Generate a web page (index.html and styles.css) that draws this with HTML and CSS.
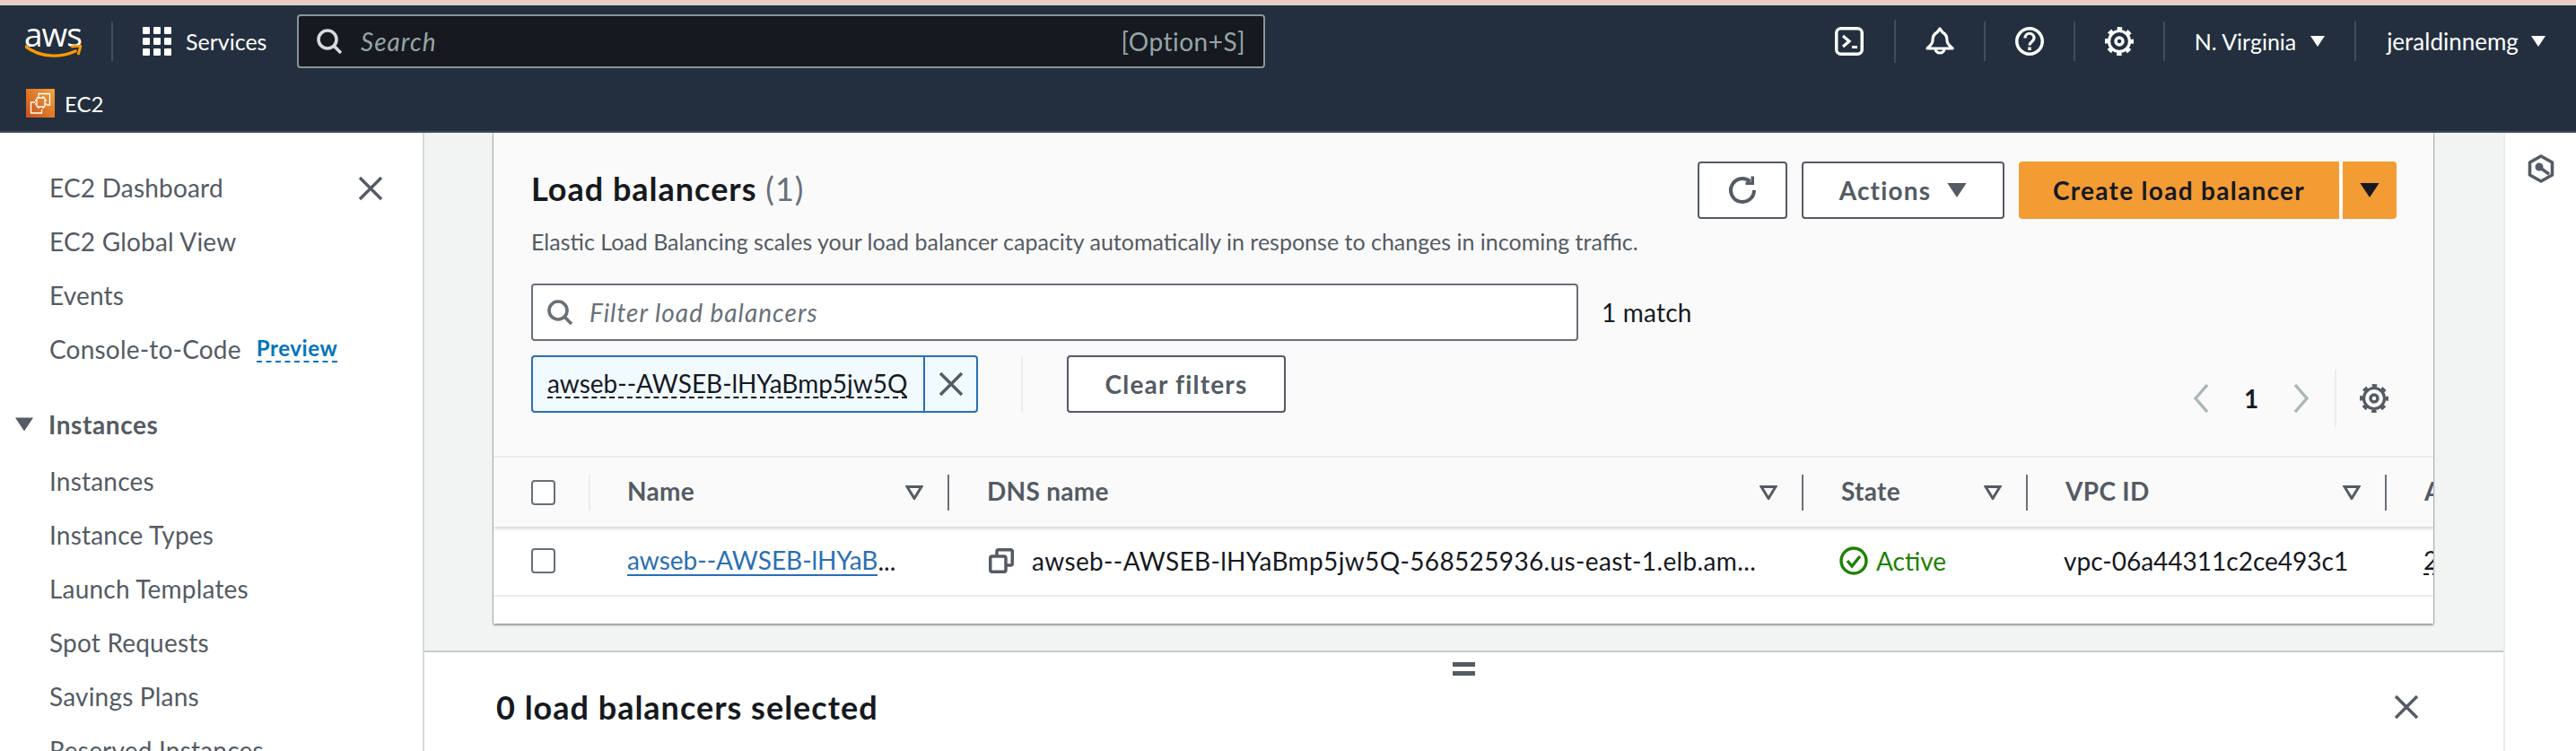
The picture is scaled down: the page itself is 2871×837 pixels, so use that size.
FILE: index.html
```html
<!DOCTYPE html>
<html lang="en">
<head>
<meta charset="utf-8">
<title>Load balancers | EC2</title>
<link rel="stylesheet" href="styles.css">
</head>
<body>
<svg class="defs" width="0" height="0">
  <symbol id="i-x" viewBox="0 0 28 28"><path d="M2 2l24 24M26 2L2 26" fill="none" stroke="currentColor" stroke-width="3.400"/></symbol>
  <symbol id="i-caret" viewBox="0 0 16 12"><path d="M0 0h16L8 12z" fill="currentColor"/></symbol>
  <symbol id="i-sort" viewBox="0 0 20 16"><path d="M2 1.500h16L10 14.500z" fill="none" stroke="currentColor" stroke-width="3"/></symbol>
  <symbol id="i-search" viewBox="0 0 28 28"><circle cx="12" cy="12" r="10" fill="none" stroke="currentColor" stroke-width="3.600"/><path d="M19 19l8 8" fill="none" stroke="currentColor" stroke-width="3.600"/></symbol>
  <symbol id="i-gear" viewBox="0 0 32 32"><circle cx="16" cy="16" r="11.500" fill="none" stroke="currentColor" stroke-width="3.200"/><circle cx="16" cy="16" r="14.250" fill="none" stroke="currentColor" stroke-width="3.500" stroke-dasharray="5.500 5.690" stroke-dashoffset="2.750"/><circle cx="16" cy="16" r="4" fill="none" stroke="currentColor" stroke-width="3.400"/></symbol>
</svg>

<header class="topnav">
  <div class="topnav-main">
    <div class="aws-logo">
      <span class="aws-word">aws</span>
      <svg class="aws-smile" viewBox="0 0 64 16"><path d="M1 2c16 12 38 13 56 5" fill="none" stroke="#f90" stroke-width="3.400" stroke-linecap="round"/><path d="M52 2l11-1-3 10" fill="none" stroke="#f90" stroke-width="3" stroke-linejoin="round"/></svg>
    </div>
    <span class="nav-sep nav-sep-logo"></span>
    <div class="services">
      <span class="grid-icon"><i></i><i></i><i></i><i></i><i></i><i></i><i></i><i></i><i></i></span>
      <span>Services</span>
    </div>
    <div class="global-search">
      <svg class="search-icon"><use href="#i-search"/></svg>
      <span class="global-search-text">Search</span>
      <span class="global-search-key">[Option+S]</span>
    </div>
    <div class="nav-tools">
      <span class="tool">
        <svg class="tool-icon" viewBox="0 0 32 32"><rect x="1.750" y="1.750" width="28.500" height="28.500" rx="5" fill="none" stroke="currentColor" stroke-width="3.500"/><path d="M9 10l7 6-7 6M19 22.500h6" fill="none" stroke="currentColor" stroke-width="3.200"/></svg>
      </span>
      <span class="tool tool-tall">
        <svg class="tool-icon" viewBox="0 0 32 32"><path d="M16 2l3 4c4 2 5 5 5 9 0 4 3 6 6 9H2c3-3 6-5 6-9 0-4 1-7 5-9z" fill="none" stroke="currentColor" stroke-width="3.200" stroke-linejoin="round"/><path d="M11 24a5 5 0 0 0 10 0" fill="none" stroke="currentColor" stroke-width="3.200"/></svg>
      </span>
      <span class="tool">
        <svg class="tool-icon" viewBox="0 0 32 32"><circle cx="16" cy="16" r="14.250" fill="none" stroke="currentColor" stroke-width="3.500"/><path d="M11 12.500c0-7 10-7 10 0 0 4-5 4-5 8" fill="none" stroke="currentColor" stroke-width="3.200"/><path d="M14.250 22.500h3.500V26h-3.500z" fill="currentColor"/></svg>
      </span>
      <span class="tool">
        <svg class="tool-icon"><use href="#i-gear"/></svg>
      </span>
      <span class="tool tool-text tool-region">N. Virginia <svg class="tool-caret"><use href="#i-caret"/></svg></span>
      <span class="tool tool-text tool-user">jeraldinnemg <svg class="tool-caret"><use href="#i-caret"/></svg></span>
    </div>
  </div>
  <div class="topnav-sub">
    <span class="ec2-tile">
      <svg viewBox="0 0 32 32" fill="none" stroke="#fff" stroke-width="1.300"><path d="M14 8V5.500h12.500V18H23"/><path d="M10 15H5.500v12h12v-4"/><rect x="12" y="10" width="9" height="10" rx="1"/><path d="M14 8v2M19 8v2M14 20v2M19 20v2M10 13h2M10 17h2M21 13h2M21 17h2"/></svg>
    </span>
    <span>EC2</span>
  </div>
</header>

<div class="shell">
  <nav class="sidenav">
    <div class="side-close">
      <svg class="x-icon"><use href="#i-x"/></svg>
    </div>
    <ul class="side-list">
      <li class="side-item">EC2 Dashboard</li>
      <li class="side-item">EC2 Global View</li>
      <li class="side-item">Events</li>
      <li class="side-item">Console-to-Code <span class="preview">Preview</span></li>
    </ul>
    <div class="side-head"><svg class="side-caret"><use href="#i-caret"/></svg>Instances</div>
    <ul class="side-list">
      <li class="side-item">Instances</li>
      <li class="side-item">Instance Types</li>
      <li class="side-item">Launch Templates</li>
      <li class="side-item">Spot Requests</li>
      <li class="side-item">Savings Plans</li>
      <li class="side-item">Reserved Instances</li>
    </ul>
  </nav>

  <main class="main">
    <section class="main-top">
      <div class="card">
        <div class="card-header">
          <div class="title-row">
            <div>
              <h1 class="card-title">Load balancers <span class="count">(1)</span></h1>
            </div>
            <div class="actions">
              <button class="btn btn-icon">
                <svg viewBox="0 0 36 36"><path d="M31 18a13 13 0 1 1-4.500-9.800" fill="none" stroke="currentColor" stroke-width="4"/><path d="M31 2.500V12H21.500V8.500h6V2.500z" fill="currentColor"/></svg>
              </button>
              <button class="btn btn-actions">Actions <svg class="btn-caret"><use href="#i-caret"/></svg></button>
              <div class="split">
                <button class="btn-primary">Create load balancer</button>
                <button class="btn-primary-caret"><svg class="btn-caret"><use href="#i-caret"/></svg></button>
              </div>
            </div>
          </div>
          <p class="card-desc">Elastic Load Balancing scales your load balancer capacity automatically in response to changes in incoming traffic.</p>
        </div>

        <div class="filter-row">
          <div class="filter-input">
            <svg class="search-icon"><use href="#i-search"/></svg>
            <span>Filter load balancers</span>
          </div>
          <span class="match">1 match</span>
        </div>

        <div class="token-row">
          <div class="token">
            <span class="token-text"><span class="token-label">awseb--AWSEB-lHYaBmp5jw5Q</span></span>
            <span class="token-x"><svg class="x-icon"><use href="#i-x"/></svg></span>
          </div>
          <span class="token-sep"></span>
          <button class="btn btn-clear">Clear filters</button>
          <div class="pager">
            <svg class="chev" viewBox="0 0 18 32"><path d="M16 1L3 16l13 15" fill="none" stroke="currentColor" stroke-width="3.400"/></svg>
            <span class="page-num">1</span>
            <svg class="chev" viewBox="0 0 18 32"><path d="M2 1l13 15L2 31" fill="none" stroke="currentColor" stroke-width="3.400"/></svg>
            <span class="pager-sep"></span>
            <svg class="pager-gear"><use href="#i-gear"/></svg>
          </div>
        </div>

        <div class="table">
          <div class="tr th-row">
            <div class="th th-check"><span class="checkbox"></span><span class="th-line"></span></div>
            <div class="th"><span class="th-inner th-name"><span class="th-label">Name</span><svg class="sort"><use href="#i-sort"/></svg></span></div>
            <div class="th"><span class="th-inner"><span class="th-label">DNS name</span><svg class="sort"><use href="#i-sort"/></svg></span></div>
            <div class="th"><span class="th-inner"><span class="th-label">State</span><svg class="sort"><use href="#i-sort"/></svg></span></div>
            <div class="th"><span class="th-inner"><span class="th-label">VPC ID</span><svg class="sort"><use href="#i-sort"/></svg></span></div>
            <div class="th"><span class="th-inner th-last"><span class="th-label">Availability Zones</span></span></div>
          </div>
          <div class="tr td-row">
            <div class="td td-check"><span class="checkbox"></span></div>
            <div class="td td-name"><a class="link">awseb--AWSEB-lHYaB</a>...</div>
            <div class="td td-dns">
              <svg class="copy" viewBox="0 0 28 28"><rect x="9" y="1.750" width="17.250" height="17.250" rx="2" fill="none" stroke="currentColor" stroke-width="3.500"/><rect x="1.750" y="9" width="17.250" height="17.250" rx="2" fill="#fff" stroke="currentColor" stroke-width="3.500"/></svg>
              <span>awseb--AWSEB-lHYaBmp5jw5Q-568525936.us-east-1.elb.am...</span>
            </div>
            <div class="td td-state">
              <svg class="ok" viewBox="0 0 32 32"><circle cx="16" cy="16" r="14" fill="none" stroke="currentColor" stroke-width="3.400"/><path d="M9 16l5 6 9-11" fill="none" stroke="currentColor" stroke-width="3.400"/></svg>
              <span>Active</span>
            </div>
            <div class="td td-vpc">vpc-06a44311c2ce493c1</div>
            <div class="td td-last"><span class="az">2 Availability Zones</span></div>
          </div>
        </div>
      </div>
    </section>

    <section class="split-panel">
      <div class="handle"><i></i><i></i></div>
      <div class="panel-head">
        <h2 class="panel-title">0 load balancers selected</h2>
        <svg class="x-icon"><use href="#i-x"/></svg>
      </div>
    </section>
  </main>

  <aside class="rail">
    <svg class="rail-icon" viewBox="0 0 30 32"><path d="M15 2l12.500 7v14L15 30 2.500 23V9z" fill="none" stroke="currentColor" stroke-width="3.600" stroke-linejoin="round"/><circle cx="13" cy="14" r="4.500" fill="currentColor"/><path d="M14 15l10 7" stroke="currentColor" stroke-width="3.400"/></svg>
  </aside>
</div>
</body>
</html>
```

FILE: styles.css
```css
* { box-sizing: border-box; }
html, body { margin: 0; height: 100%; }
body {
  height: 837px;
  overflow: hidden;
  display: flex;
  flex-direction: column;
  font-family: "Lato", "Open Sans", sans-serif;
  font-size: 28px;
  color: #16191f;
  background: #fff;
  border-top: 4px solid #eccbc2;
}
.defs { position: absolute; }
h1, h2, p, ul { margin: 0; padding: 0; }
ul { list-style: none; }

/* Top navigation */
.topnav {
  flex: none;
  height: 144px;
  padding-top: 2px;
  background: #232f3e;
  border-top: 2px solid #d8d4d2;
  border-bottom: 2px solid #414d5c;
  color: #fff;
  display: flex;
  flex-direction: column;
}
.topnav-main {
  height: 76px;
  display: flex;
  align-items: center;
}
.aws-logo {
  width: 64px;
  margin-left: 27px;
  display: flex;
  flex-direction: column;
  align-items: center;
}
.aws-word {
  font-family: "Open Sans", sans-serif;
  font-size: 37px;
  line-height: 24px;
  letter-spacing: -1px;
  height: 24px;
}
.aws-smile { width: 63px; height: 16px; }
.nav-sep { width: 2px; height: 44px; background: #414d5c; }
.nav-sep-logo { margin-left: 33px; }
.services {
  margin-left: 33px;
  display: flex;
  align-items: center;
  gap: 16px;
  font-size: 25px;
  width: 138px;
}
.grid-icon {
  display: grid;
  grid-template-columns: repeat(3, 8px);
  grid-auto-rows: 8px;
  gap: 4px;
  width: 32px;
}
.grid-icon i { background: #fff; border-radius: 1px; }
.global-search {
  margin-left: 34px;
  width: 1079px;
  height: 60px;
  background: #16191f;
  border: 2px solid #879596;
  border-radius: 4px;
  display: flex;
  align-items: center;
  padding: 0 20px;
  color: #d5dbdb;
}
.search-icon { width: 28px; height: 28px; flex: none; }
.global-search-text { margin-left: 21px; font-style: italic; color: #95a5a6; letter-spacing: 1px; }
.global-search-key { margin-left: auto; color: #95a5a6; letter-spacing: .5px; }
.nav-tools {
  margin-left: auto;
  display: flex;
  align-items: center;
  height: 48px;
}
.tool {
  display: flex;
  align-items: center;
  justify-content: center;
  height: 44px;
  width: 100px;
  border-left: 2px solid #414d5c;
}
.tool:first-child { border-left: 0; }
.tool-tall { height: 48px; }
.tool-icon { width: 32px; height: 32px; }
.tool-text { gap: 14px; font-size: 26px; }
.tool-region { width: 213px; font-size: 25px; gap: 16px; }
.tool-user { width: 247px; }
.tool-caret { width: 16px; height: 12px; }

.topnav-sub {
  flex: 1;
  display: flex;
  align-items: center;
  gap: 11px;
  padding-left: 29px;
  font-size: 24px;
}
.ec2-tile {
  width: 32px;
  height: 32px;
  background: linear-gradient(to top right, #c8511b, #f5a23a);
  display: flex;
}
.ec2-tile svg { width: 32px; height: 32px; }

/* Layout */
.shell {
  flex: 1;
  min-height: 0;
  display: flex;
}
.sidenav {
  flex: none;
  width: 473px;
  border-right: 2px solid #d5dbdb;
  padding-top: 32px;
  position: relative;
  color: #545b64;
}
.side-close {
  position: absolute;
  top: 48px;
  left: 399px;
  display: flex;
}
.x-icon { width: 28px; height: 28px; color: #545b64; flex: none; }
.side-item {
  height: 60px;
  display: flex;
  align-items: center;
  padding: 0 0 2px 55px;
  gap: 17px;
  letter-spacing: .2px;
}
.preview {
  font-size: 24px;
  font-weight: 700;
  color: #0073bb;
  border-bottom: 2px dashed #0073bb;
  line-height: 28px;
  letter-spacing: .6px;
}
.side-head {
  height: 60px;
  margin-top: 24px;
  margin-bottom: 3px;
  display: flex;
  align-items: center;
  font-weight: 700;
  padding: 0 0 2px 17px;
  gap: 17px;
  letter-spacing: .6px;
}
.side-caret { width: 20px; height: 16px; }

.main {
  flex: 1;
  min-width: 0;
  display: flex;
  flex-direction: column;
}
.main-top {
  height: 577px;
  flex: none;
  padding: 0 78px 30px 77px;
  background: #f2f3f3;
}
.card {
  height: 547px;
  background: #fafafa;
  box-shadow: 0 2px 2px rgba(84, 91, 100, .55), 1px 0 1px rgba(84, 91, 100, .3), -1px 0 1px rgba(84, 91, 100, .3);
  display: flex;
  flex-direction: column;
  overflow: hidden;
}
.card-header { padding: 32px 41px 0 42px; }
.title-row {
  display: flex;
  justify-content: space-between;
  align-items: flex-start;
  height: 72px;
}
.card-title {
  font-size: 36px;
  font-weight: 700;
  line-height: 60px;
  letter-spacing: 1px;
}
.count { font-weight: 400; color: #687078; }
.actions { display: flex; gap: 16px; }
.btn {
  height: 64px;
  background: #fff;
  border: 2px solid #545b64;
  border-radius: 4px;
  color: #545b64;
  font: inherit;
  font-weight: 700;
  letter-spacing: 1.200px;
  display: flex;
  align-items: center;
  justify-content: center;
  padding: 0;
}
.btn-icon { width: 100px; }
.btn-icon svg { width: 36px; height: 36px; }
.btn-actions { width: 226px; gap: 18px; }
.btn-caret { width: 22px; height: 16px; }
.split { display: flex; gap: 4px; }
.btn-primary, .btn-primary-caret {
  height: 64px;
  border: 0;
  background: #f39c34;
  color: #16191f;
  font: inherit;
  font-weight: 700;
  letter-spacing: 1.300px;
  padding: 0;
}
.btn-primary { width: 357px; border-radius: 4px 0 0 4px; }
.btn-primary-caret { width: 60px; border-radius: 0 4px 4px 0; display: flex; align-items: center; justify-content: center; }
.card-desc {
  font-size: 25px;
  line-height: 34px;
  color: #545b64;
}

.filter-row {
  display: flex;
  align-items: center;
  margin-top: 30px;
  padding-left: 42px;
  gap: 26px;
}
.filter-input {
  width: 1167px;
  height: 64px;
  background: #fff;
  border: 2px solid #687078;
  border-radius: 4px;
  display: flex;
  align-items: center;
  gap: 19px;
  padding: 0 16px;
  font-style: italic;
  color: #687078;
  letter-spacing: 1px;
}
.filter-input .search-icon { color: #687078; }
.match { color: #16191f; letter-spacing: .2px; }

.token-row {
  display: flex;
  align-items: flex-start;
  margin-top: 16px;
  padding-left: 42px;
  height: 112px;
  flex: none;
}
.token {
  width: 498px;
  height: 64px;
  background: #f1faff;
  border: 2px solid #2a6fb5;
  border-radius: 4px;
  display: flex;
}
.token-text {
  width: 437px;
  padding-left: 16px;
  display: flex;
  align-items: center;
  border-right: 2px solid #2a6fb5;
}
.token-label { border-bottom: 2px dashed #16191f; line-height: 30px; }
.token-x { flex: 1; display: flex; align-items: center; justify-content: center; }
.token-sep { width: 2px; height: 64px; margin-left: 48px; background: #eaeded; }
.btn-clear { width: 244px; margin-left: 49px; }
.pager {
  margin-left: auto;
  margin-right: 50px;
  margin-top: 16px;
  height: 64px;
  display: flex;
  align-items: center;
  color: #aab7b8;
}
.chev { width: 18px; height: 32px; }
.page-num { width: 94px; text-align: center; color: #16191f; font-weight: 700; }
.pager-sep { width: 2px; height: 64px; background: #eaeded; margin: 0 26px 0 28px; }
.pager-gear { width: 32px; height: 32px; color: #545b64; }

.table { flex: 1; min-height: 0; overflow: hidden; border-top: 2px solid #eaeded; background: #fff; }
.tr {
  display: grid;
  grid-template-columns: 108px 400px 952px 250px 400px 200px;
  width: 2310px;
}
.th-row {
  height: 77px;
  background: #fafafa;
  box-shadow: 0 2px 4px rgba(0, 28, 36, .2);
  position: relative;
  color: #545b64;
  font-weight: 700;
}
.th { display: flex; align-items: center; }
.th-check { justify-content: space-between; padding-left: 42px; }
.th-line { width: 2px; height: 40px; background: #eaeded; }
.th-inner {
  flex: 1;
  height: 40px;
  display: flex;
  align-items: center;
  justify-content: space-between;
  padding: 0 27px 0 42px;
  border-right: 2px solid #687078;
}
.th-label { margin-bottom: 3px; letter-spacing: .3px; }
.th-name { padding-left: 41px; }
.th-last { border: 0; white-space: nowrap; }
.sort { width: 20px; height: 16px; flex: none; }
.checkbox {
  width: 27px;
  height: 28px;
  border: 2px solid #687078;
  border-radius: 4px;
  background: #fff;
  flex: none;
}
.td-row {
  height: 78px;
  background: #fff;
  border-bottom: 2px solid #eaeded;
}
.td { display: flex; align-items: center; white-space: nowrap; }
.td-check { padding-left: 42px; }
.td-name { padding-left: 41px; }
.link { color: #2a6fb5; border-bottom: 2px solid #2a6fb5; line-height: 32px; }
.td-dns { padding-left: 44px; gap: 20px; letter-spacing: .36px; }
.copy { width: 28px; height: 28px; color: #545b64; flex: none; }
.td-state { padding-left: 40px; gap: 9px; color: #1d8102; }
.ok { width: 32px; height: 32px; }
.td-vpc { padding-left: 40px; }
.td-last { padding-left: 41px; }
.az { border-bottom: 2px dashed #16191f; line-height: 30px; }

.split-panel {
  flex: 1;
  min-height: 0;
  background: #fff;
  border-top: 2px solid #c6cccd;
  display: flex;
  flex-direction: column;
}
.handle {
  display: flex;
  flex-direction: column;
  gap: 5px;
  align-items: center;
  padding-top: 11px;
  height: 26px;
}
.handle i { width: 25px; height: 5px; background: #545b64; flex: none; }
.panel-head {
  display: flex;
  justify-content: space-between;
  align-items: center;
  padding: 10px 94px 0 80px;
}
.panel-title { font-size: 36px; font-weight: 700; line-height: 50px; letter-spacing: 1px; }

.rail {
  flex: none;
  width: 81px;
  border-left: 2px solid #eaeded;
  display: flex;
  justify-content: center;
  padding-top: 24px;
  color: #545b64;
}
.rail-icon { width: 30px; height: 32px; }
```
